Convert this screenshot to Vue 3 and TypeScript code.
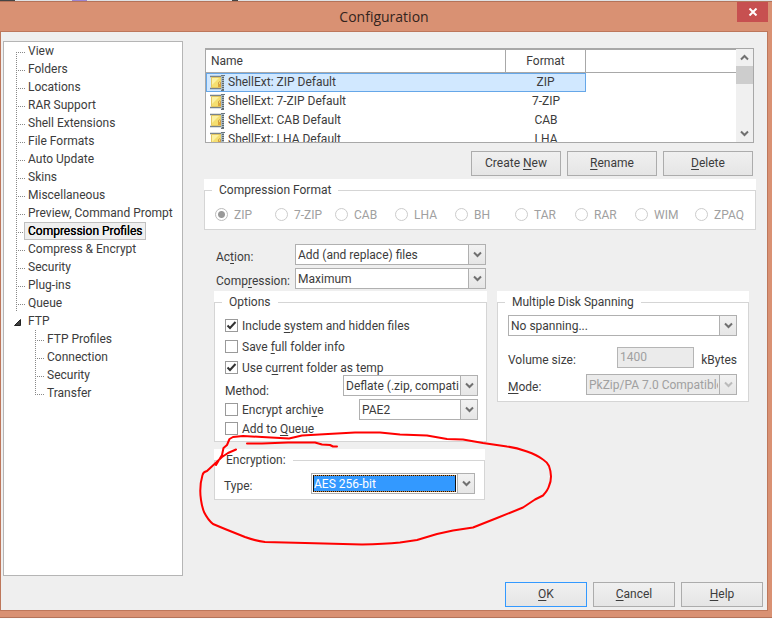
<script setup lang="ts">
import { ref } from 'vue'

interface TreeItem {
  label: string
  selected?: boolean
  children?: string[]
}

interface Profile {
  name: string
  format: string
}

const tree: TreeItem[] = [
  { label: 'View' },
  { label: 'Folders' },
  { label: 'Locations' },
  { label: 'RAR Support' },
  { label: 'Shell Extensions' },
  { label: 'File Formats' },
  { label: 'Auto Update' },
  { label: 'Skins' },
  { label: 'Miscellaneous' },
  { label: 'Preview, Command Prompt' },
  { label: 'Compression Profiles', selected: true },
  { label: 'Compress & Encrypt' },
  { label: 'Security' },
  { label: 'Plug-ins' },
  { label: 'Queue' },
  { label: 'FTP', children: ['FTP Profiles', 'Connection', 'Security', 'Transfer'] },
]

const profiles: Profile[] = [
  { name: 'ShellExt: ZIP Default', format: 'ZIP' },
  { name: 'ShellExt: 7-ZIP Default', format: '7-ZIP' },
  { name: 'ShellExt: CAB Default', format: 'CAB' },
  { name: 'ShellExt: LHA Default', format: 'LHA' },
]

const formats: string[] = ['ZIP', '7-ZIP', 'CAB', 'LHA', 'BH', 'TAR', 'RAR', 'WIM', 'ZPAQ']

const activeProfile = ref(0)
const format = ref('ZIP')
const includeHidden = ref(true)
const saveFolderInfo = ref(false)
const currentAsTemp = ref(true)
const encrypt = ref(false)
const queue = ref(false)
const volumeSize = ref('1400')
</script>

<template>
  <div class="screen">
    <div class="desktop"><i class="speck"></i><i class="speck violet"></i><i class="speck small"></i></div>
    <div class="window">
      <header class="titlebar">
        <h1>Configuration</h1>
        <button type="button" class="close" aria-label="Close">
          <svg width="10" height="8" viewBox="0 0 10 8"><path d="M1.500 .5 8.500 7.500M8.500 .5 1.500 7.500" stroke="#fff" stroke-width="2" fill="none" /></svg>
        </button>
      </header>

      <div class="client">
        <div class="body">
          <nav class="tree">
            <ul>
              <li v-for="item in tree" :key="item.label" :class="{ parent: item.children }">
                <svg v-if="item.children" class="twist" width="7" height="7" viewBox="0 0 7 7"><path d="M6.500 .5V6.500H.5Z" fill="#404040" stroke="#222" /></svg>
                <a href="#" :class="{ selected: item.selected }">{{ item.label }}</a>
                <ul v-if="item.children" class="sub">
                  <li v-for="child in item.children" :key="child"><a href="#">{{ child }}</a></li>
                </ul>
              </li>
            </ul>
          </nav>

          <main>
            <div class="list">
              <div class="viewport">
                <table>
                  <thead>
                    <tr><th class="name">Name</th><th class="format">Format</th><th></th></tr>
                  </thead>
                  <tbody>
                    <tr v-for="(p, i) in profiles" :key="p.name" :class="{ active: i === activeProfile }" @click="activeProfile = i">
                      <td class="name">
                        <span class="cell">
                          <svg width="16" height="16" viewBox="0 0 16 16">
                            <path d="M0 1.500H12M0 13.500H12" stroke="#78838a" stroke-width="1.500" />
                            <path d="M1.500 2.500H11V12.500H1.500Z" fill="#f5df70" stroke="#e3c763" />
                            <path d="M2 3H9L2 10Z" fill="#fbf1a4" />
                            <path d="M8.500 9V7.500Q9.500 6 10.500 7.500V9" fill="none" stroke="#c99a4a" />
                            <path d="M8 9H11V12H8Z" fill="#dda53c" />
                            <path d="M12.500 1V15" stroke="#a9b8c0" stroke-width="3" />
                            <path d="M13 0V16" stroke="#5c6870" stroke-width="2" stroke-dasharray="1 1" />
                            <path d="M11 .5H15M11 15.500H14" stroke="#69757d" />
                          </svg>
                          {{ p.name }}
                        </span>
                      </td>
                      <td class="format">{{ p.format }}</td>
                      <td></td>
                    </tr>
                  </tbody>
                </table>
              </div>
              <div class="scrollbar">
                <button type="button" aria-label="Scroll up"><svg width="9" height="7" viewBox="0 0 9 7"><path d="M1 5.500 4.500 2 8 5.500" /></svg></button>
                <span class="thumb"></span>
                <button type="button" aria-label="Scroll down"><svg width="9" height="7" viewBox="0 0 9 7"><path d="M1 1.500 4.500 5 8 1.500" /></svg></button>
              </div>
            </div>

            <div class="actions">
              <button type="button" class="push">Create <u>N</u>ew</button>
              <button type="button" class="push"><u>R</u>ename</button>
              <button type="button" class="push"><u>D</u>elete</button>
            </div>

            <div class="group">
              <fieldset disabled>
                <legend>Compression Format</legend>
                <div class="formats">
                  <label v-for="f in formats" :key="f"><input v-model="format" type="radio" name="format" :value="f" />{{ f }}</label>
                </div>
              </fieldset>
            </div>

            <div class="panels">
              <div class="left">
                <div class="pairs">
                  <label for="action">Ac<u>t</u>ion:</label>
                  <span class="combo">
                    <select id="action"><option>Add (and replace) files</option></select>
                    <span class="drop"><svg width="9" height="7" viewBox="0 0 9 7"><path d="M1 1.500 4.500 5 8 1.500" /></svg></span>
                  </span>
                  <label for="compression">Comp<u>r</u>ession:</label>
                  <span class="combo">
                    <select id="compression"><option>Maximum</option></select>
                    <span class="drop"><svg width="9" height="7" viewBox="0 0 9 7"><path d="M1 1.500 4.500 5 8 1.500" /></svg></span>
                  </span>
                </div>

                <div class="group">
                  <fieldset>
                    <legend>Options</legend>
                    <div class="options">
                      <label class="check"><input v-model="includeHidden" type="checkbox" /><span>Include <u>s</u>ystem and hidden files</span></label>
                      <label class="check"><input v-model="saveFolderInfo" type="checkbox" /><span>Save <u>f</u>ull folder info</span></label>
                      <label class="check"><input v-model="currentAsTemp" type="checkbox" /><span>Use c<u>u</u>rrent folder as temp</span></label>
                      <div class="line raised">
                        <label for="method">Method:</label>
                        <span class="combo method">
                          <select id="method"><option>Deflate (.zip, compatible)</option></select>
                          <span class="drop"><svg width="9" height="7" viewBox="0 0 9 7"><path d="M1 1.500 4.500 5 8 1.500" /></svg></span>
                        </span>
                      </div>
                      <div class="line">
                        <label class="check"><input v-model="encrypt" type="checkbox" /><span>Encrypt archi<u>v</u>e</span></label>
                        <span class="combo cipher">
                          <select aria-label="Encryption format"><option>PAE2</option></select>
                          <span class="drop"><svg width="9" height="7" viewBox="0 0 9 7"><path d="M1 1.500 4.500 5 8 1.500" /></svg></span>
                        </span>
                      </div>
                      <label class="check last"><input v-model="queue" type="checkbox" /><span>Add to <u>Q</u>ueue</span></label>
                    </div>
                  </fieldset>
                </div>

                <div class="group encryption">
                  <fieldset>
                    <legend>Encryption:</legend>
                    <div class="line">
                      <label for="type">Type:</label>
                      <span class="combo focused">
                        <select id="type"><option>AES 256-bit</option></select>
                        <span class="drop"><svg width="9" height="7" viewBox="0 0 9 7"><path d="M1 1.500 4.500 5 8 1.500" /></svg></span>
                      </span>
                    </div>
                  </fieldset>
                  <svg class="marker" width="360" height="124" viewBox="196 426 360 124">
                    <path d="M236 449.500 L228 453 L222 457 L207 471 Q203 472 202.500 475 Q199 487 201 500 Q202 507 204 512 Q208 520 213 524 L225 529 L245 537 Q256 541 265 542 L305 543 L362 544.500 Q384 544 400 542.500 Q410 541 417 540 L437 534 L453 530.500 L473 527.500 L497 518 L523 507.500 L535 499.500 L543 495.500 Q548 490 549 486 Q553 477 549 466 Q547 462 543 459.500 Q537 455 527 451.500 Q516 447.500 507 446.500 L483 443 L463 439.500 L447 439 L427 435.500 L400 434.500 L380 432.500 L355 432.500 L328 434 L302 435.500 L289 438.500 L262 437 L243 436 L233 437 L229.500 439 L227 445 L223.500 448 L222 455 L216 465" />
                    <path d="M247 443.500 L262 443.500 L288 442.500 L315 442.500 L322 444.500 L330 445 L333 446.500 L337 446.500" />
                  </svg>
                </div>
              </div>

              <div class="right">
                <div class="group">
                  <fieldset>
                    <legend>Multiple Disk Spanning</legend>
                    <div class="spanning">
                      <span class="combo">
                        <select aria-label="Spanning"><option>No spanning...</option></select>
                        <span class="drop"><svg width="9" height="7" viewBox="0 0 9 7"><path d="M1 1.500 4.500 5 8 1.500" /></svg></span>
                      </span>
                      <div class="line volume">
                        <label for="volume">Volume size:</label>
                        <input id="volume" v-model="volumeSize" type="text" disabled />
                        <span class="unit">kBytes</span>
                      </div>
                      <div class="line">
                        <label for="mode"><u>M</u>ode:</label>
                        <span class="combo mode">
                          <select id="mode" disabled><option>PkZip/PA 7.0 Compatible</option></select>
                          <span class="drop"><svg width="9" height="7" viewBox="0 0 9 7"><path d="M1 1.500 4.500 5 8 1.500" /></svg></span>
                        </span>
                      </div>
                    </div>
                  </fieldset>
                </div>
              </div>
            </div>
          </main>
        </div>

        <footer>
          <button type="button" class="push default"><u>O</u>K</button>
          <button type="button" class="push"><u>C</u>ancel</button>
          <button type="button" class="push"><u>H</u>elp</button>
        </footer>
      </div>
    </div>
  </div>
</template>

<style>
body {
  margin: 0;
  background: #fbfbfb;
}
</style>

<style scoped>
* {
  box-sizing: border-box;
}
.screen {
  display: flex;
  flex-direction: column;
  min-height: 100vh;
  padding-bottom: 1px;
  font: 12px/18px Roboto, "Open Sans", sans-serif;
  color: #3c3c3c;
}
button,
input,
select {
  margin: 0;
  font: inherit;
  color: inherit;
}
u {
  text-underline-offset: 2px;
  text-decoration-skip-ink: none;
}
.desktop {
  display: flex;
  height: 1px;
  background: #dfe3e6;
}
.speck {
  width: 15px;
  background: #444;
}
.violet {
  margin-left: 57px;
  background: #9b84d0;
}
.small {
  width: 6px;
  margin-left: 145px;
}
.window {
  display: flex;
  flex: 1;
  flex-direction: column;
  padding: 0 4px 6px 0;
  border-top: 1px solid #b4735a;
  border-bottom: 1px solid #b4735a;
  background: #d99173;
}
.titlebar {
  display: grid;
  grid-template-columns: 1fr auto;
  align-items: start;
  height: 29px;
}
h1 {
  grid-area: 1 / 1 / 2 / 3;
  margin: 0;
  font-family: "Open Sans", sans-serif;
  font-size: 14px;
  font-weight: 400;
  line-height: 30px;
  text-align: center;
  color: #33241d;
}
.close {
  grid-area: 1 / 2;
  display: flex;
  align-items: center;
  justify-content: center;
  width: 31px;
  height: 20px;
  padding: 0;
  border: 0;
  background: #c75050;
}
.client {
  display: flex;
  flex: 1;
  flex-direction: column;
  padding-bottom: 3px;
  border: 1px solid #bd775b;
  background: #efefef;
}
.body {
  display: grid;
  flex: 1;
  grid-template-columns: 180px minmax(0, 1fr);
  gap: 21px;
  padding: 9px 11px 6px 2px;
}
.tree {
  padding: 0 0 0 12px;
  border: 1px solid #b5b5b5;
  background: #fff;
}
.tree ul {
  margin: 0;
  padding: 0;
  list-style: none;
}
.tree li {
  padding-left: 8px;
  background:
    repeating-linear-gradient(#888 0 1px, #fff 1px 2px) 0 0 / 1px 18px no-repeat,
    repeating-linear-gradient(90deg, #888 0 1px, #fff 1px 2px) 0 10px / 9px 1px no-repeat;
}
.tree > ul > li:first-child {
  background-position: 0 10px, 0 10px;
}
.tree li.parent {
  position: relative;
  background: none;
}
.tree a {
  display: block;
  width: fit-content;
  padding: 0 3px;
  border: 1px solid transparent;
  line-height: 16px;
  white-space: nowrap;
  color: inherit;
  text-decoration: none;
}
.tree a.selected {
  border-color: #c0c0c0;
  background: #efefef;
  color: #000;
  text-shadow: 0 0 0 #000;
}
.tree .sub {
  margin-left: 11px;
}
.tree .sub li:last-child {
  background-size: 1px 10px, 9px 1px;
}
.twist {
  position: absolute;
  top: 7px;
  left: -2px;
}
main {
  padding-top: 7px;
}
.list {
  display: grid;
  grid-template-columns: minmax(0, 1fr) 17px;
  height: 95px;
  margin: 0 2px 0 1px;
  border: 1px solid #a8a8a8;
  background: #fff;
}
.viewport {
  height: 93px;
  overflow: hidden;
  border-top: 1px solid #a8a8a8;
}
table {
  width: 100%;
  border-spacing: 0;
  table-layout: fixed;
}
th {
  height: 23px;
  padding: 0 5px;
  border-bottom: 1px solid #a8a8a8;
  font-weight: 400;
  text-align: left;
}
th.name,
th.format {
  border-right: 1px solid #a8a8a8;
}
.name {
  width: 300px;
}
.format {
  width: 80px;
  text-align: center;
}
td {
  height: 19px;
  padding: 0;
  line-height: 17px;
}
td.name {
  padding-left: 4px;
}
.active .name,
.active .format {
  border: 1px solid #66a7e8;
  background: #d1e8ff;
}
.active .name {
  padding-left: 3px;
  border-right: 0;
}
.active .format {
  border-left: 0;
}
.cell {
  display: flex;
  align-items: center;
  gap: 2px;
  height: 17px;
}
.scrollbar {
  display: flex;
  flex-direction: column;
  background: #f0f0f0;
}
.scrollbar button {
  display: flex;
  align-items: center;
  justify-content: center;
  height: 17px;
  padding: 0;
  border: 0;
  background: none;
}
.scrollbar button:last-child {
  margin-top: auto;
}
.scrollbar path,
.drop path {
  fill: none;
  stroke: #707070;
  stroke-width: 2;
}
.thumb {
  height: 18px;
  background: #cdcdcd;
}
.actions,
footer {
  display: flex;
  justify-content: flex-end;
  gap: 6px;
}
.actions {
  margin: 8px 3px 3px 0;
}
.push {
  width: 90px;
  height: 25px;
  padding: 0 0 2px;
  border: 1px solid #acacac;
  background: linear-gradient(#f0f0f0, #e5e5e5);
}
footer {
  padding-right: 4px;
}
footer .push {
  width: 82px;
}
.push.default {
  border-color: #3399ff;
}
.group {
  background: #fff;
}
fieldset {
  min-width: 0;
  margin: 0;
  padding: 0;
  border: 1px solid #d5d5d5;
}
legend {
  margin-left: 7px;
  padding: 0 7px;
  line-height: 23px;
}
.formats {
  display: grid;
  grid-template-columns: repeat(9, minmax(0, 1fr));
  padding: 2px 0 4px 10px;
  color: #a0a0a0;
}
.formats label {
  display: flex;
  align-items: center;
  gap: 6px;
  height: 21px;
}
input[type="radio"] {
  flex: none;
  width: 13px;
  height: 13px;
  border: 1px solid #ccc;
  border-radius: 50%;
  background: #fff;
  appearance: none;
}
input[type="radio"]:checked {
  border-color: #bbb;
  background: radial-gradient(circle, #999 0 3px, #fff 4px);
}
.panels {
  display: grid;
  grid-template-columns: minmax(0, 273fr) minmax(0, 252fr);
  gap: 10px;
  padding: 14px 7px 0 10px;
}
.pairs {
  display: grid;
  grid-template-columns: 79px minmax(0, 1fr);
  gap: 3px 0;
  padding: 0 1px 2px 2px;
}
.pairs > label,
.line > label:not(.check) {
  height: 21px;
  padding-top: 4px;
}
.combo {
  display: grid;
  height: 21px;
}
.combo select {
  grid-area: 1 / 1;
  width: 100%;
  min-width: 0;
  height: 21px;
  padding: 0 18px 0 2px;
  border: 1px solid #b0b0b0;
  border-radius: 0;
  background: #fff;
  appearance: none;
}
.drop {
  grid-area: 1 / 1;
  display: flex;
  align-items: center;
  justify-content: center;
  justify-self: end;
  width: 18px;
  height: 21px;
  border: 1px solid #b0b0b0;
  background: linear-gradient(#f2f2f2, #e6e6e6);
  pointer-events: none;
}
select:disabled,
input:disabled {
  opacity: 1;
}
.combo select:disabled,
.volume input {
  background: #ebebeb;
  color: #a0a0a0;
}
select:disabled + .drop path {
  stroke: #bbb;
}
.options {
  padding: 1px 8px 4px 10px;
}
.check {
  display: flex;
  align-items: center;
  gap: 4px;
  height: 21px;
  white-space: nowrap;
}
.check.last {
  height: 17px;
}
input[type="checkbox"] {
  width: 13px;
  height: 13px;
  border: 1px solid #9a9a9a;
  background: #fff;
  appearance: none;
}
input[type="checkbox"]:checked {
  background: #fff url("data:image/svg+xml,%3Csvg xmlns='http://www.w3.org/2000/svg' viewBox='0 0 11 11'%3E%3Cpath d='M1.500 5.500 4 8 9.500 2' fill='none' stroke='%23333' stroke-width='2'/%3E%3C/svg%3E") center / 11px 11px no-repeat;
}
.line {
  display: flex;
  justify-content: space-between;
  height: 21px;
}
.raised .combo {
  margin-top: -3px;
}
.method {
  width: 135px;
}
.cipher {
  width: 119px;
}
.encryption {
  position: relative;
  margin: 7px 2px 0 0;
}
.encryption .line {
  padding: 0 9px;
  margin: 1px 0 5px;
}
.encryption legend {
  margin-left: 4px;
}
.focused {
  width: 164px;
}
.focused select {
  color: #fff;
  background:
    linear-gradient(#3399ff, #3399ff) 2px 2px / calc(100% - 21px) 15px no-repeat,
    repeating-linear-gradient(90deg, #111 0 1px, #cc8844 1px 2px) 1px 1px / calc(100% - 19px) 17px no-repeat,
    #fff;
}
.marker {
  position: absolute;
  top: -23px;
  left: -18px;
  fill: none;
  stroke: #ff0000;
  stroke-width: 2;
  stroke-linecap: round;
  stroke-linejoin: round;
  pointer-events: none;
}
.right {
  padding-top: 47px;
}
.spanning {
  padding: 1px 11px 6px 10px;
}
.volume {
  justify-content: flex-start;
  margin: 11px 0 6px;
}
.volume label {
  flex: none;
  width: 109px;
}
.volume input {
  flex: 0 1 80px;
  min-width: 0;
  height: 21px;
  padding: 0 2px 2px;
  border: 1px solid #b5b5b5;
}
.unit {
  flex: none;
  padding: 4px 0 0 7px;
}
.mode {
  width: 151px;
}
</style>
